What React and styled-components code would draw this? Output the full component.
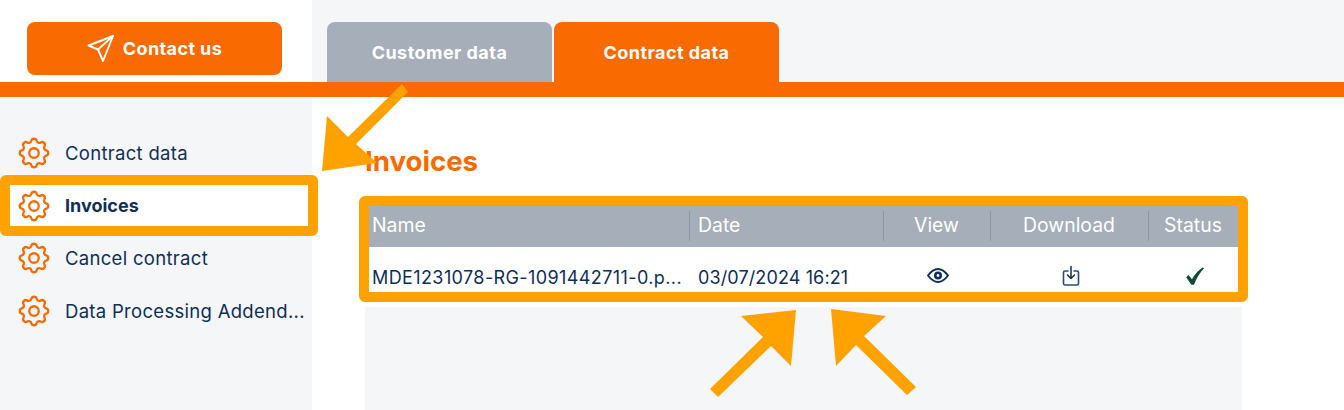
import React from "react";
import styled, { createGlobalStyle } from "styled-components";
import { TbSettings } from "react-icons/tb";

const Global = createGlobalStyle`
  html, body { margin: 0; padding: 0; background: #fff; }
  body { font-family: Inter, "Liberation Sans", sans-serif; color: #0d2f5a; }
`;

const Page = styled.div`
  position: relative;
  width: 1344px;
  height: 410px;
  overflow: hidden;
  display: grid;
  grid-template-columns: 312px 1fr;
  grid-template-rows: 82px 15px 1fr;
`;
const BrandCell = styled.div`
  background: #fff;
  padding: 22px 30px 0 27px;
`;
const ContactButton = styled.button`
  width: 255px;
  height: 53px;
  border: 0;
  padding: 0;
  border-radius: 8px;
  background: #f96a00;
  color: #fff;
  font: 700 18px Inter, sans-serif;
  letter-spacing: 0.4px;
  display: flex;
  align-items: center;
  justify-content: center;
  gap: 9px;
`;
const Tabs = styled.div`
  background: #f5f6f8;
  padding: 22px 0 0 15px;
  display: flex;
  gap: 2px;
`;
const Tab = styled.div`
  width: 225px;
  height: 60px;
  border-radius: 8px 8px 0 0;
  background: ${p => (p.$active ? "#f96a00" : "#a5aeb9")};
  color: #fff;
  font-size: 18px;
  font-weight: 700;
  letter-spacing: 0.45px;
  display: flex;
  align-items: center;
  justify-content: center;
`;
const Bar = styled.div`
  grid-column: 1 / 3;
  background: #f96a00;
`;
const Sidebar = styled.nav`
  background: #f5f6f8;
  padding-top: 30px;
`;
const NavItem = styled.div`
  height: 52.6px;
  padding-left: 15px;
  display: flex;
  align-items: center;
  gap: 12px;
  font-size: ${p => (p.$active ? "18px" : "18.5px")};
  font-weight: ${p => (p.$active ? 700 : 400)};
  letter-spacing: ${p => (p.$active ? "0" : "0.3px")};
  background: ${p => (p.$active ? "#fff" : "transparent")};
  white-space: nowrap;
  svg { color: #f96a00; flex: none; }
`;
const Main = styled.main`
  background: #fff;
  padding: 47px 102px 0 53px;
`;
const Title = styled.h1`
  margin: 0 0 28px 0;
  height: 34px;
  line-height: 34px;
  font-size: 27.6px;
  font-weight: 700;
  color: #f96a00;
`;
const Table = styled.div`
  width: 877px;
  height: 210px;
  background: #f5f6f8;
`;
const Row = styled.div`
  display: grid;
  grid-template-columns: 324px 194px 107px 158px 90px;
`;
const HeadRow = styled(Row)`
  height: 41px;
  background: #a5aeb9;
  color: #fff;
  font-size: 19.4px;
`;
const BodyRow = styled(Row)`
  height: 60px;
  background: #fff;
  font-size: 18px;
`;
const HeadCell = styled.div`
  display: flex;
  align-items: center;
  justify-content: ${p => (p.$center ? "center" : "flex-start")};
  padding-left: ${p => (p.$center ? "0" : `${p.$pad}px`)};
  padding-bottom: 4px;
  position: relative;
  &:not(:first-child)::before {
    content: "";
    position: absolute;
    left: 0;
    top: 5px;
    bottom: 6px;
    width: 1px;
    background: #8d97a3;
  }
`;
const TextCell = styled.div`
  height: 60px;
  display: flex;
  align-items: center;
  padding-left: ${p => p.$pad}px;
  letter-spacing: ${p => p.$track}px;
  white-space: nowrap;
  overflow: hidden;
`;
const IconCell = styled.div`
  height: 57px;
  display: flex;
  align-items: center;
  justify-content: center;
  padding-left: ${p => p.$shift || 0}px;
`;
const Frame = styled.div`
  position: absolute;
  box-sizing: border-box;
  border: 10px solid #ffa200;
  border-radius: 6px;
  pointer-events: none;
  left: ${p => p.$x}px;
  top: ${p => p.$y}px;
  width: ${p => p.$w}px;
  height: ${p => p.$h}px;
`;
const Overlay = styled.svg`
  position: absolute;
  left: 0;
  top: 0;
  pointer-events: none;
`;

const Plane = () => (
  <svg width="27" height="27" viewBox="0 0 27 27" fill="none" stroke="#fff" strokeWidth="1.9" strokeLinejoin="round" strokeLinecap="round">
    <path d="M26 1 1.500 10.500 11 14.500 16 26z" />
    <path d="M26 1 11 14.500" />
  </svg>
);
const Eye = () => (
  <svg width="22" height="15" viewBox="0 0 22 15">
    <path d="M1 7.500C4 3.500 7 1 11 1s7 2.500 10 6.500c-3 4-6 6.500-10 6.500S4 11.500 1 7.500z" fill="none" stroke="#0d2f5a" strokeWidth="1.900" />
    <circle cx="11" cy="7.500" r="4" fill="#0d2f5a" />
    <circle cx="11" cy="7.500" r="1.400" fill="#fff" />
  </svg>
);
const Download = () => (
  <svg width="18" height="22" viewBox="0 0 18 22" fill="none" strokeLinecap="round" strokeLinejoin="round">
    <path d="M6 6H3a1.500 1.500 0 0 0-1.500 1.500v11A1.500 1.500 0 0 0 3 20h12a1.500 1.500 0 0 0 1.500-1.500v-11A1.500 1.500 0 0 0 15 6h-3" stroke="#2a4a75" strokeWidth="1.600" />
    <path d="M9 1.500V13.500M5.500 10 9 13.500 12.500 10" stroke="#0d2f5a" strokeWidth="1.500" />
  </svg>
);
const Check = () => (
  <svg width="18" height="18" viewBox="0 0 18 18">
    <path d="M0.200 10.300 2.500 8 6 12.300C8.600 7.600 12.300 3.300 17 0.300L18 1.300C13.500 6 10.300 11.500 8 17.800H5.300z" fill="#0b4f33" />
  </svg>
);

const items = ["Contract data", "Invoices", "Cancel contract", "Data Processing Addend..."];

export default function App() {
  return (
    <Page>
      <Global />
      <BrandCell>
        <ContactButton>
          <Plane />
          Contact us
        </ContactButton>
      </BrandCell>
      <Tabs>
        <Tab>Customer data</Tab>
        <Tab $active>Contract data</Tab>
      </Tabs>
      <Bar />
      <Sidebar>
        {items.map((t, i) => (
          <NavItem key={t} $active={i === 1}>
            <TbSettings size={38} strokeWidth={1.45} />
            {t}
          </NavItem>
        ))}
      </Sidebar>
      <Main>
        <Title>Invoices</Title>
        <Table>
          <HeadRow>
            <HeadCell $pad={7}>Name</HeadCell>
            <HeadCell $pad={9}>Date</HeadCell>
            <HeadCell $center>View</HeadCell>
            <HeadCell $center>Download</HeadCell>
            <HeadCell $center>Status</HeadCell>
          </HeadRow>
          <BodyRow>
            <TextCell $pad={7} $track={0.4}>MDE1231078-RG-1091442711-0.p...</TextCell>
            <TextCell $pad={9} $track={0.12}>03/07/2024 16:21</TextCell>
            <IconCell $shift={2}><Eye /></IconCell>
            <IconCell $shift={4}><Download /></IconCell>
            <IconCell $shift={3}><Check /></IconCell>
          </BodyRow>
        </Table>
      </Main>
      <Frame $x={0} $y={175} $w={318} $h={61} />
      <Frame $x={359} $y={196} $w={889} $h={106} />
      <Overlay width="1344" height="410" viewBox="0 0 1344 410">
        <g fill="#ffa200">
          <polygon points="408,92 402,84 348,137 327,116 322,171 377,163 356,144" />
          <polygon points="796,310 741,316 763,337 710,389 718,397 771,346 791,366" />
          <polygon points="831,309 886,316 864,336 916,387 907,395 856,345 836,366" />
        </g>
      </Overlay>
    </Page>
  );
}
